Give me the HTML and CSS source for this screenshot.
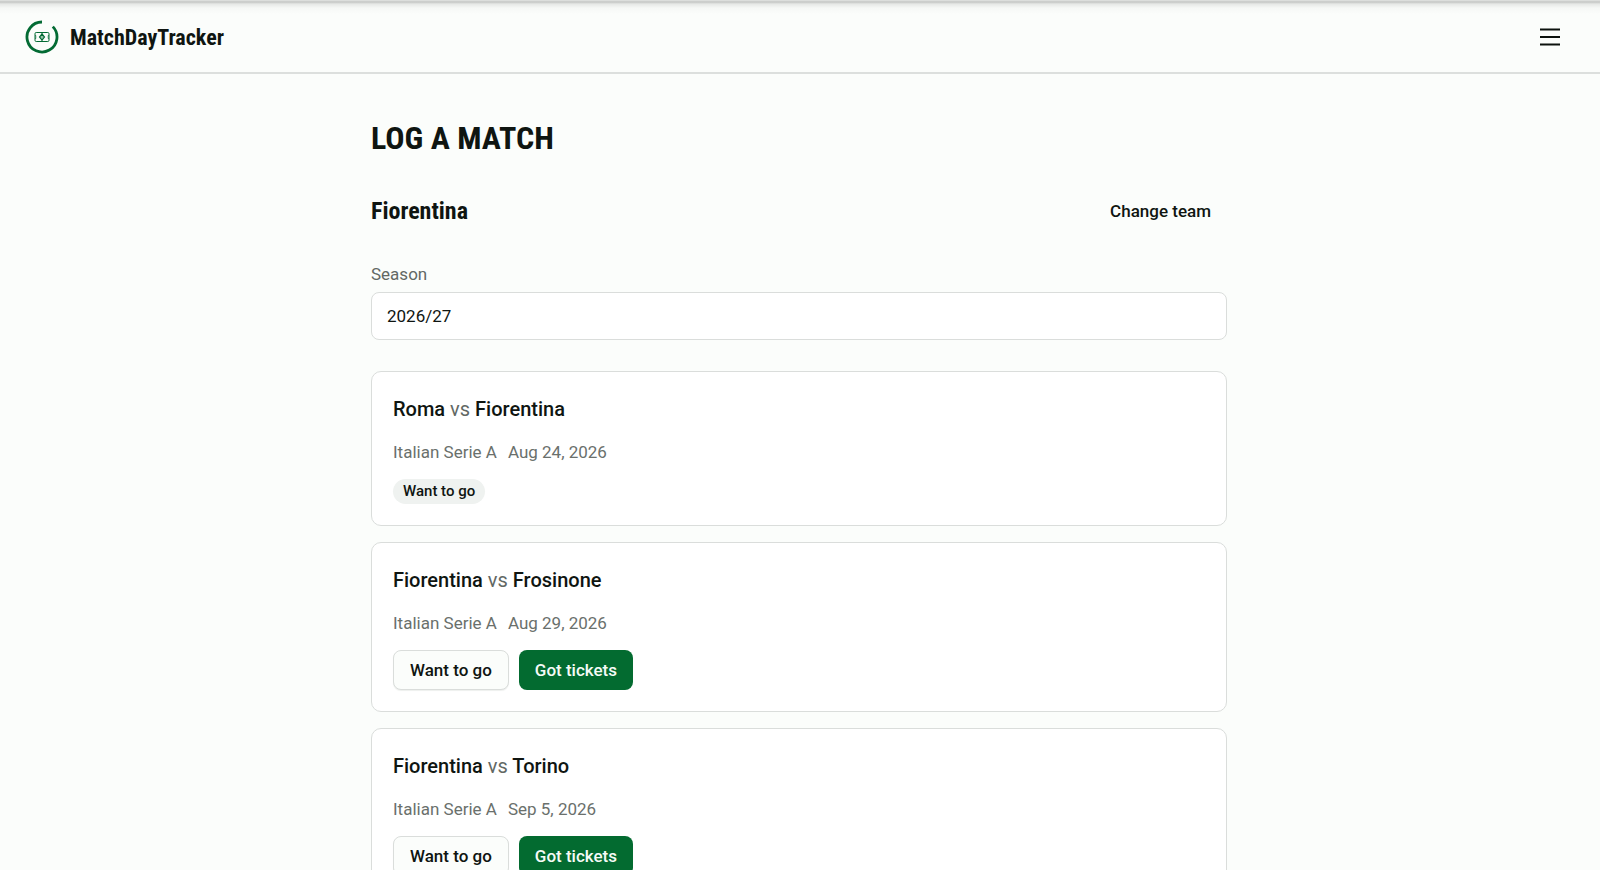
FILE: index.html
```html
<!DOCTYPE html>
<html lang="en">
<head>
<meta charset="utf-8">
<title>MatchDayTracker</title>
<link rel="stylesheet" href="styles.css">
</head>
<body>
<header class="topbar">
  <a class="brand" href="#">
    <svg class="brand-mark" viewBox="0 0 34 34" fill="none" stroke="#036b34" aria-hidden="true">
      <path d="M17 2A15 15 0 1 0 27.800 6.600" stroke-width="2.800"/>
      <rect x="10" y="12.500" width="14" height="9" rx="1.200" stroke-width="1"/>
      <path d="M17 12.500v2M17 19.500v2M10 15.500h.8v3H10M24 15.500h-.8v3H24" stroke-width=".7"/>
      <path d="M17 14l2.500 3-2.500 3-2.500-3z" stroke-width="1.200"/>
      <path d="M15.500 17h3" stroke-width=".8"/>
    </svg>
    <span class="brand-name">MatchDayTracker</span>
  </a>
  <button class="menu" type="button" aria-label="Open menu">
    <svg viewBox="0 0 20 18" stroke="#0c120e" stroke-width="2" aria-hidden="true"><path d="M0 1.500h20M0 9h20M0 16.500h20"/></svg>
  </button>
</header>
<main class="page">
  <h1 class="page-title">LOG A MATCH</h1>
  <div class="team-row">
    <h2 class="team">Fiorentina</h2>
    <button class="btn btn-ghost" type="button">Change team</button>
  </div>
  <div class="field">
    <label class="label" for="season">Season</label>
    <select class="select" id="season"><option>2026/27</option></select>
  </div>
  <div class="matches">
    <article class="card">
      <h3 class="fixture">Roma <span class="vs">vs</span> Fiorentina</h3>
      <p class="meta"><span>Italian Serie A</span><span>Aug 24, 2026</span></p>
      <span class="pill">Want to go</span>
    </article>
    <article class="card">
      <h3 class="fixture">Fiorentina <span class="vs">vs</span> Frosinone</h3>
      <p class="meta"><span>Italian Serie A</span><span>Aug 29, 2026</span></p>
      <div class="actions">
        <button class="btn btn-outline" type="button">Want to go</button>
        <button class="btn btn-primary" type="button">Got tickets</button>
      </div>
    </article>
    <article class="card">
      <h3 class="fixture">Fiorentina <span class="vs">vs</span> Torino</h3>
      <p class="meta"><span>Italian Serie A</span><span>Sep 5, 2026</span></p>
      <div class="actions">
        <button class="btn btn-outline" type="button">Want to go</button>
        <button class="btn btn-primary" type="button">Got tickets</button>
      </div>
    </article>
  </div>
</main>
</body>
</html>
```
FILE: styles.css
```css
* { box-sizing: border-box; }
html { overflow: hidden; }
body {
  margin: 0;
  background: #fbfdfb;
  color: #0f1511;
  font-family: Roboto, "Liberation Sans", sans-serif;
  font-size: 17px;
  line-height: 26px;
}
h1, h2, h3, p { margin: 0; }
button, select { font: inherit; color: inherit; }
.topbar {
  display: flex;
  align-items: center;
  justify-content: space-between;
  height: 74px;
  padding: 2px 40px 0 25px;
  border-bottom: 2px solid #dcdfdd;
  background: linear-gradient(#e4e6e4, #c4c6c4 2px, #e6e8e6 4px, #f6f8f6 8px, #fbfdfb 14px);
}
.brand {
  display: flex;
  align-items: center;
  gap: 11px;
  color: inherit;
  text-decoration: none;
  font-family: "Roboto Condensed", "Liberation Sans Narrow", "Liberation Sans", sans-serif;
  font-size: 22px;
  font-weight: 700;
}
.brand-mark { width: 34px; height: 34px; }
.brand-name { padding-top: 2px; }
.menu {
  display: flex;
  padding: 0;
  border: 0;
  background: none;
}
.menu svg { width: 20px; height: 18px; }
.page {
  max-width: 858px;
  margin: 0 auto;
  padding: 40px 2px 0 0;
}
.page-title, .team {
  font-family: "Roboto Condensed", "Liberation Sans Narrow", "Liberation Sans", sans-serif;
  font-weight: 700;
}
.page-title { font-size: 32px; line-height: 48px; }
.team-row {
  display: flex;
  align-items: center;
  justify-content: space-between;
  margin-top: 29px;
}
.team { font-size: 24px; line-height: 34px; }
.btn {
  height: 40px;
  padding: 0 15px;
  border: 1px solid transparent;
  border-radius: 8px;
  font-weight: 500;
}
.btn-ghost { background: none; }
.btn-outline {
  padding: 0 16px;
  background: #fbfdfb;
  border-color: #dadddb;
  box-shadow: 0 1px 1px #eef0ee;
}
.btn-primary { background: #036b30; color: #f5fbf7; }
.field { margin-top: 30px; }
.label { display: block; color: #626864; }
.select {
  display: block;
  width: 100%;
  height: 48px;
  margin-top: 5px;
  padding: 0 15px;
  appearance: none;
  background: #fff;
  border: 1px solid #dadddb;
  border-radius: 8px;
}
.matches {
  display: grid;
  gap: 16px;
  margin-top: 31px;
}
.card {
  display: flex;
  flex-direction: column;
  align-items: flex-start;
  gap: 14px;
  padding: 21px;
  background: #fff;
  border: 1px solid #dadddb;
  border-radius: 10px;
}
.fixture { font-size: 20px; line-height: 32px; font-weight: 500; }
.vs { color: #626864; font-weight: 400; }
.meta { display: flex; gap: 11px; color: #6a706c; }
.pill {
  padding: 0 10px;
  border-radius: 13px;
  background: #eff2f0;
  font-size: 15px;
  line-height: 25px;
  font-weight: 500;
}
.actions { display: flex; gap: 10px; }
```
